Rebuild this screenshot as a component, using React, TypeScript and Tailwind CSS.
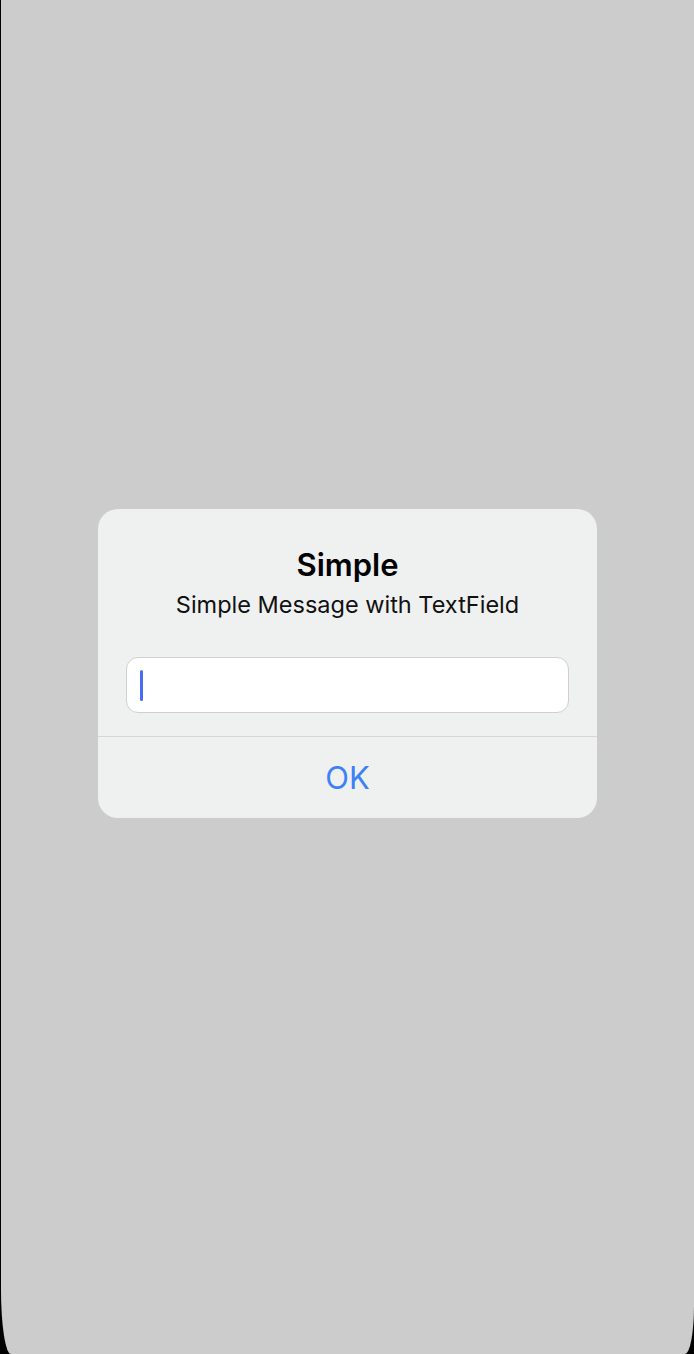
import React from 'react'

const App = () => {
  return (
    <div className="h-[1354px] w-[694px] overflow-hidden bg-black">
      <div className="ml-[1px] flex h-full flex-col items-center rounded-bl-[10px_64px] rounded-br-[9px_48px] bg-[#cccccc] pt-[509px] font-['Inter','Liberation_Sans',sans-serif]">
        {/* Alert */}
        <div className="flex w-[499px] flex-col rounded-[20px] bg-[#eff0f0]">
          <div className="flex flex-col items-center px-7 pt-[37px]">
            <h1 className="text-[31px] font-semibold leading-[38px] text-black">Simple</h1>
            <p className="mt-[6px] text-[23.5px] leading-[30px] text-[#111]">Simple Message with TextField</p>
          </div>
          <div className="mx-7 mt-[37px] mb-[23px] flex h-[56px] items-center rounded-[12px] border border-[#cfcfcf] bg-white pl-[13px]">
            <span className="h-[31px] w-[3px] rounded-full bg-[#4a6cf5]" />
          </div>
          <div className="h-px bg-[#d6d6d6]" />
          <button className="flex h-[81px] items-center justify-center pt-[2px] text-[31px] text-[#3b82f7]">OK</button>
        </div>
      </div>
    </div>
  )
}

export default App
